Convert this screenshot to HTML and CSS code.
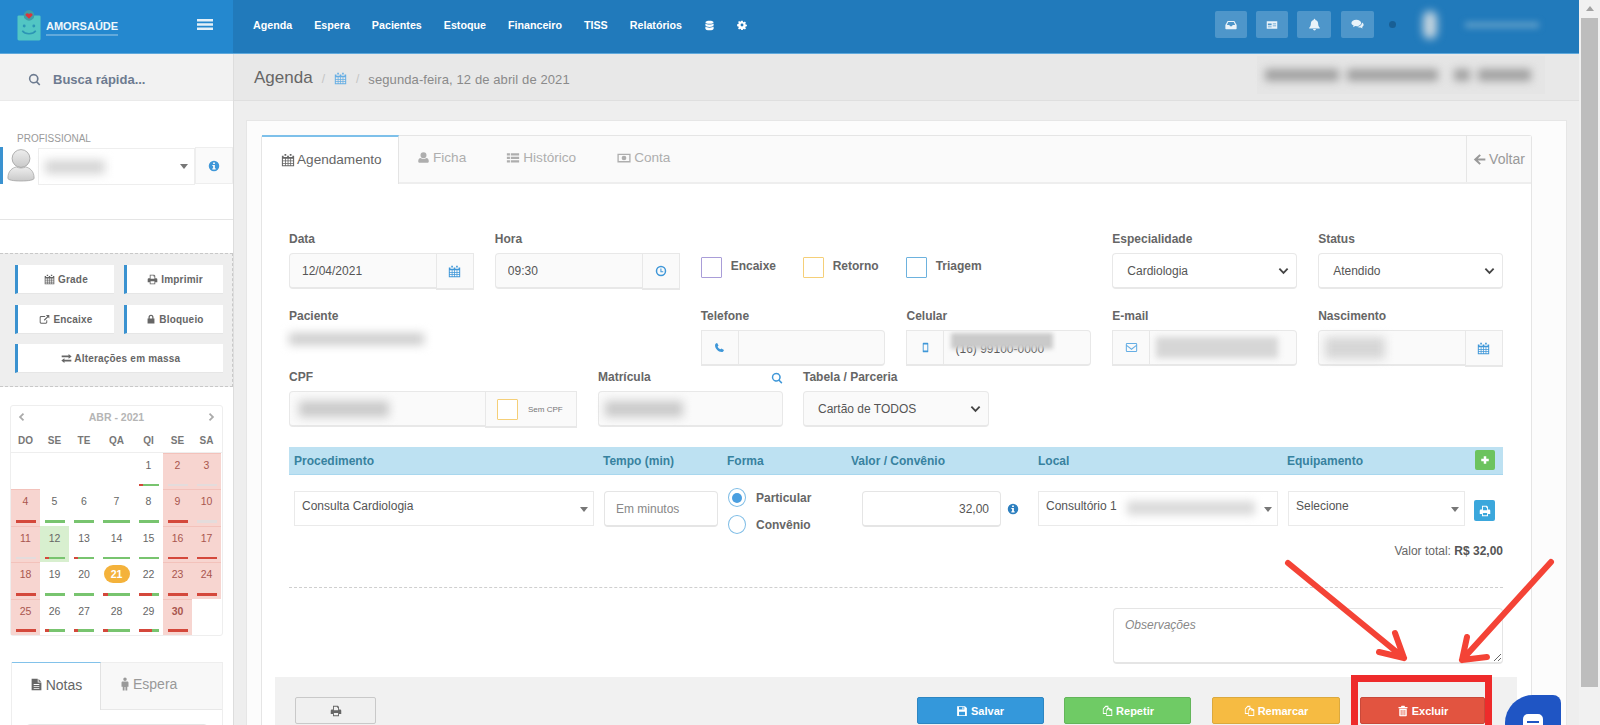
FILE: index.html
```html
<!DOCTYPE html>
<html lang="pt-BR">
<head>
<meta charset="utf-8">
<title>Agenda</title>
<link rel="stylesheet" href="styles.css">
</head>
<body>
<svg class="defs" aria-hidden="true">
  <symbol id="i-cal" viewBox="0 0 16 16"><path d="M4 1h2v2H4zM10 1h2v2h-2z"/><path fill-rule="evenodd" d="M1 3h2v1.5h4V3h2v1.5h4V3h2v12H1zM2.2 6.5v2h2.4v-2zM5.5 6.5v2h2.1v-2zM8.5 6.5v2h2.1v-2zM11.5 6.5v2h2.3v-2zM2.2 9.4v2h2.4v-2zM5.5 9.4v2h2.1v-2zM8.5 9.4v2h2.1v-2zM11.5 9.4v2h2.3v-2zM2.2 12.2v1.7h2.4v-1.7zM5.5 12.2v1.7h2.1v-1.7zM8.5 12.2v1.7h2.1v-1.7zM11.5 12.2v1.7h2.3v-1.7z"/></symbol>
  <symbol id="i-search" viewBox="0 0 16 16"><path fill-rule="evenodd" d="M7 1a6 6 0 0 1 4.8 9.6l3.4 3.4-1.4 1.5-3.5-3.4A6 6 0 1 1 7 1zm0 2a4 4 0 1 0 0 8 4 4 0 0 0 0-8z"/></symbol>
  <symbol id="i-clock" viewBox="0 0 16 16"><path fill-rule="evenodd" d="M8 1a7 7 0 1 1 0 14A7 7 0 0 1 8 1zm0 2a5 5 0 1 0 0 10A5 5 0 0 0 8 3zM7.200 4.500h1.400v3.700h2.400v1.300H7.200z"/></symbol>
  <symbol id="i-phone" viewBox="0 0 16 16"><path d="M4.500 1.500 6.600 5 5.300 6.500c.7 1.800 2 3.200 4 4.200l1.500-1.300 3.700 2.100c-.4 1.700-1.600 3-3.200 3C6 14.500 1.500 9.500 1.500 4.700c0-1.500 1.300-2.800 3-3.200z"/></symbol>
  <symbol id="i-mobile" viewBox="0 0 16 16"><path fill-rule="evenodd" d="M5 1h6a1 1 0 0 1 1 1v12a1 1 0 0 1-1 1H5a1 1 0 0 1-1-1V2a1 1 0 0 1 1-1zm.3 2.500v9h5.400v-9z"/></symbol>
  <symbol id="i-mail" viewBox="0 0 16 16"><path fill-rule="evenodd" d="M2.500 2.500h11A1.500 1.500 0 0 1 15 4v8a1.500 1.500 0 0 1-1.500 1.500h-11A1.500 1.500 0 0 1 1 12V4a1.500 1.500 0 0 1 1.500-1.500zm-.2 2.300L8 9.300l5.700-4.500V3.800H2.300zm0 1.600v5.800h11.400V6.400L8 11 2.300 6.400z"/></symbol>
  <symbol id="i-user" viewBox="0 0 16 16"><path d="M8 1.500a3.700 3.700 0 1 1 0 7.400 3.700 3.700 0 0 1 0-7.400zM4.500 8.500c1 .8 2.200 1.200 3.500 1.200s2.500-.4 3.500-1.200c2 .2 3 1.700 3 4 0 1.200-.8 2-2 2h-9c-1.200 0-2-.8-2-2 0-2.300 1-3.800 3-4z"/></symbol>
  <symbol id="i-list" viewBox="0 0 16 16"><path d="M1 2.500h3.500v2.500H1zM5.500 2.500H15v2.500H5.500zM1 6.500h3.500V9H1zM5.500 6.500H15V9H5.500zM1 10.500h3.500V13H1zM5.500 10.500H15V13H5.500z"/></symbol>
  <symbol id="i-money" viewBox="0 0 16 16"><path fill-rule="evenodd" d="M.5 3h15v10H.5zM2 4.500v7h12v-7zM8 5.300a2.700 2.700 0 1 1 0 5.400 2.700 2.700 0 0 1 0-5.400z"/></symbol>
  <symbol id="i-back" viewBox="0 0 16 16"><path d="M8 1.500 9.700 3.200 6 6.800h9.200v2.400H6l3.700 3.600L8 14.500 1 8z"/></symbol>
  <symbol id="i-print" viewBox="0 0 16 16"><path fill-rule="evenodd" d="M4 1h6.500L12 2.500V6h1.500A1.500 1.500 0 0 1 15 7.500V12h-3v3H4v-3H1V7.500A1.500 1.500 0 0 1 2.500 6H4zm1.200 1.200V7h5.600V3.500H9.500V2.200zM5.200 10.500v3.300h5.600v-3.300z"/></symbol>
  <symbol id="i-ext" viewBox="0 0 16 16"><path d="M3 3h6v1.400H3.400c-.6 0-1 .4-1 1v6.200c0 .6.400 1 1 1h6.200c.6 0 1-.4 1-1V9H12v3c0 1.200-.8 2-2 2H3c-1.200 0-2-.8-2-2V5c0-1.200.8-2 2-2z"/><path d="M10 1.500h5v5l-1.800-1.800-5 5-1.200-1.200 5-5z"/></symbol>
  <symbol id="i-lock" viewBox="0 0 16 16"><path fill-rule="evenodd" d="M8 1a4 4 0 0 1 4 4v2h1.500v8h-11V7H4V5a4 4 0 0 1 4-4zm0 2a2 2 0 0 0-2 2v2h4V5a2 2 0 0 0-2-2z"/></symbol>
  <symbol id="i-swap" viewBox="0 0 16 16"><path d="M11 1.500 15.500 5 11 8.500V6.200H1V3.800h10zM5 7.500v2.300h10v2.400H5v2.300L.5 11z"/></symbol>
  <symbol id="i-inbox" viewBox="0 0 16 16"><path fill-rule="evenodd" d="M3.500 2.500h9L15.500 8v4.500a1 1 0 0 1-1 1h-13a1 1 0 0 1-1-1V8zm.8 1.500L2.500 8h3.300l.9 1.500h2.600l.9-1.500h3.300l-1.800-4z"/></symbol>
  <symbol id="i-card" viewBox="0 0 16 16"><path fill-rule="evenodd" d="M1 3h14v10H1zM2.500 6v2.200h5V6zM9 6v1h4.500V6zM9 8.500v1h4.500v-1zM2.500 10v1h5v-1z"/></symbol>
  <symbol id="i-bell" viewBox="0 0 16 16"><path d="M8 .8c.6 0 1 .4 1 1v.6c2.300.5 3.500 2.400 3.500 4.800 0 2.300.8 3.700 2 4.800v.8h-13V12c1.200-1.100 2-2.500 2-4.800 0-2.400 1.200-4.300 3.500-4.800v-.6c0-.6.400-1 1-1zM6.200 13.500h3.600a1.800 1.800 0 0 1-3.600 0z"/></symbol>
  <symbol id="i-chat" viewBox="0 0 16 16"><path d="M6.500 2c3.300 0 6 1.800 6 4s-2.700 4-6 4l-1.200-.1L2.500 11.500l.7-2.300C1.500 8.500.5 7.300.5 6c0-2.200 2.700-4 6-4z"/><path d="M13.500 5.500c1.300.7 2 1.700 2 2.800 0 1.100-.7 2-1.800 2.700l.5 2-2.400-1.400-1.300.1c-1.300 0-2.400-.3-3.200-.9 3.500-.2 6.200-2.200 6.200-5.300z"/></symbol>
  <symbol id="i-db" viewBox="0 0 16 16"><path d="M8 1c3.300 0 6 1 6 2.300S11.300 5.600 8 5.600 2 4.600 2 3.300 4.700 1 8 1zM2 5.200c1 .9 3.400 1.500 6 1.500s5-.6 6-1.500v2.500C14 9 11.300 10 8 10S2 9 2 7.700zM2 9.600c1 .9 3.400 1.500 6 1.500s5-.6 6-1.500v3.100c0 1.300-2.700 2.300-6 2.300s-6-1-6-2.300z"/></symbol>
  <symbol id="i-gear" viewBox="0 0 16 16"><path fill-rule="evenodd" d="M6.800 1h2.400l.4 2 1.300.6 1.700-1.100 1.700 1.700-1.100 1.700.6 1.300 2 .4v2.400l-2 .4-.6 1.300 1.100 1.700-1.700 1.700-1.700-1.100-1.300.6-.4 2H6.800l-.4-2-1.300-.6-1.700 1.100-1.700-1.700 1.100-1.700-.6-1.300-2-.4V6.600l2-.4.6-1.300-1.100-1.700 1.700-1.700 1.700 1.100 1.300-.6zM8 5.700a2.300 2.300 0 1 0 0 4.600 2.300 2.300 0 0 0 0-4.600z"/></symbol>
  <symbol id="i-info" viewBox="0 0 16 16"><path fill-rule="evenodd" d="M8 1a7 7 0 1 1 0 14A7 7 0 0 1 8 1zM6.800 3.200v2.200h2.400V3.200zM5.800 6.500v1.400h1V11h-1v1.500h4.400V11h-1V6.500z"/></symbol>
  <symbol id="i-save" viewBox="0 0 16 16"><path fill-rule="evenodd" d="M1.500 1.500H12L14.500 4v10.500h-13zM4 2.500V6h7V2.500zM8.500 3h1.500v2.500H8.500zM4 9v4.500h8V9z"/></symbol>
  <symbol id="i-copy" viewBox="0 0 16 16"><path fill-rule="evenodd" d="M6 1h4l-.5 2L13 5l2 1v8.500H7V12H2.500V5zm1.800 6.500v5.800h6V7.500H11V5zM6 3 3.600 5.500v5.300H7V6.300L8.500 4.200 8.800 2.400z"/></symbol>
  <symbol id="i-trash" viewBox="0 0 16 16"><path fill-rule="evenodd" d="M6 1h4l.8 1.700H14V4.200H2V2.700h3.200zM3 5h10v9a1 1 0 0 1-1 1H4a1 1 0 0 1-1-1zm2 1.500v7h1v-7zm2.500 0v7h1v-7zm2.500 0v7h1v-7z"/></symbol>
  <symbol id="i-plus" viewBox="0 0 16 16"><path d="M6 2h4v4h4v4h-4v4H6v-4H2V6h4z"/></symbol>
  <symbol id="i-file" viewBox="0 0 16 16"><path fill-rule="evenodd" d="M2 1h7.500v4.500H14V15H2zM4.500 7.500v1h7v-1zM4.500 10v1h7v-1zM4.500 12.500v1h7v-1z"/><path d="M10.500 1.200 13.800 4.500h-3.300z"/></symbol>
  <symbol id="i-male" viewBox="0 0 16 16"><path d="M8 .5a2 2 0 1 1 0 4 2 2 0 0 1 0-4zM5.500 5h5c.9 0 1.500.6 1.500 1.500v4.500h-1.400V15.500H8.500v-4h-1v4H5.400V11H4V6.500C4 5.600 4.600 5 5.500 5z"/></symbol>
  <symbol id="i-bars" viewBox="0 0 16 12" preserveAspectRatio="none"><path d="M0 0h16v2.600H0zM0 4.700h16v2.600H0zM0 9.400h16V12H0z"/></symbol>
  <symbol id="i-left" viewBox="0 0 16 16"><path d="M11 1.500 13 3.500 8.500 8 13 12.500 11 14.500 4.500 8z"/></symbol>
  <symbol id="i-right" viewBox="0 0 16 16"><path d="M5 1.500 3 3.500 7.500 8 3 12.500 5 14.500 11.500 8z"/></symbol>
</svg>

<div class="page">
  <div class="app">
    <header class="topbar">
      <div class="brand">
        <svg class="logo" viewBox="0 0 26 32" aria-hidden="true">
          <rect x="0.500" y="6" width="24" height="26" rx="1.500" fill="#52c6c4"/>
          <circle cx="12.500" cy="6" r="5.500" fill="#3f9ea8"/>
          <path d="M12.500 9.500 9 6c-1-1.700 1.900-3.300 3.500-1.500C14.100 2.700 17 4.300 16 6z" fill="#d9363e"/>
          <circle cx="7.500" cy="17" r="1.500" fill="#2c95b5"/>
          <circle cx="17.500" cy="17" r="1.500" fill="#2c95b5"/>
          <path d="M5.500 22c3 4 11 4 14 0" fill="none" stroke="#2c95b5" stroke-width="1.600"/>
        </svg>
        <div class="brand-text">
          <span class="brand-name">AMORSAÚDE</span>
          <span class="brand-tag"></span>
        </div>
        <svg class="ico menu-ico"><use href="#i-bars"/></svg>
      </div>
      <nav class="nav">
        <ul class="nav-links">
          <li>Agenda</li>
          <li>Espera</li>
          <li>Pacientes</li>
          <li>Estoque</li>
          <li>Financeiro</li>
          <li>TISS</li>
          <li>Relatórios</li>
          <li><svg class="ico ico-11"><use href="#i-db"/></svg></li>
          <li><svg class="ico ico-10"><use href="#i-gear"/></svg></li>
        </ul>
        <div class="nav-tools">
          <span class="tool tool-32"><svg class="ico ico-12"><use href="#i-inbox"/></svg></span>
          <span class="tool tool-32"><svg class="ico ico-12"><use href="#i-card"/></svg></span>
          <span class="tool tool-34"><svg class="ico ico-13"><use href="#i-bell"/></svg></span>
          <span class="tool tool-33"><svg class="ico ico-13"><use href="#i-chat"/></svg></span>
          <span class="status-dot"></span>
          <span class="blur-avatar"></span>
          <span class="blur-user"></span>
        </div>
      </nav>
    </header>

    <div class="content">
      <aside class="sidebar">
        <div class="quick">
          <svg class="ico ico-13"><use href="#i-search"/></svg>
          <span>Busca rápida...</span>
        </div>
        <div class="prof-label">PROFISSIONAL</div>
        <div class="prof-row">
          <span class="prof-avatar">
            <svg viewBox="0 0 32 38" aria-hidden="true">
              <defs><linearGradient id="av" x1="0" y1="0" x2="0" y2="1"><stop offset="0" stop-color="#eeeeee"/><stop offset="1" stop-color="#c9c9c9"/></linearGradient></defs>
              <circle cx="16" cy="11" r="9.500" fill="url(#av)" stroke="#9a9a9a" stroke-width=".8"/>
              <path d="M2 32c0-8 5-11 9-12 3 1.500 7 1.500 10 0 4 1 9 4 9 12 0 2-6 3-14 3S2 34 2 32z" fill="url(#av)" stroke="#a3a3a3" stroke-width=".8"/>
            </svg>
          </span>
          <span class="prof-select"><span class="blur blur-prof"></span><span class="caret"></span></span>
          <span class="prof-info"><svg class="ico ico-12 blue"><use href="#i-info"/></svg></span>
        </div>
        <div class="side-rule"></div>
        <div class="shortcuts">
          <button class="short"><svg class="ico ico-11"><use href="#i-cal"/></svg> Grade</button>
          <button class="short"><svg class="ico ico-11"><use href="#i-print"/></svg> Imprimir</button>
          <button class="short"><svg class="ico ico-11"><use href="#i-ext"/></svg> Encaixe</button>
          <button class="short"><svg class="ico ico-10"><use href="#i-lock"/></svg> Bloqueio</button>
          <button class="short short-wide"><svg class="ico ico-11"><use href="#i-swap"/></svg> Alterações em massa</button>
        </div>
        <div class="calendar">
          <div class="cal-head">
            <svg class="ico ico-10"><use href="#i-left"/></svg>
            <span>ABR - 2021</span>
            <svg class="ico ico-10"><use href="#i-right"/></svg>
          </div>
          <div class="cal-grid cal-week">
            <span>DO</span><span>SE</span><span>TE</span><span>QA</span><span>QI</span><span>SE</span><span>SA</span>
          </div>
          <div class="cal-grid cal-days">
            <div class="day"></div><div class="day"></div><div class="day"></div><div class="day"></div>
            <div class="day"><span class="num">1</span><i class="bar bar-m"></i></div>
            <div class="day off"><span class="num">2</span><i class="bar bar-n"></i></div>
            <div class="day off"><span class="num">3</span><i class="bar bar-n"></i></div>

            <div class="day off"><span class="num">4</span><i class="bar bar-r"></i></div>
            <div class="day"><span class="num">5</span><i class="bar bar-g"></i></div>
            <div class="day"><span class="num">6</span><i class="bar bar-g"></i></div>
            <div class="day"><span class="num">7</span><i class="bar bar-g"></i></div>
            <div class="day"><span class="num">8</span><i class="bar bar-g"></i></div>
            <div class="day off"><span class="num">9</span><i class="bar bar-r"></i></div>
            <div class="day off"><span class="num">10</span><i class="bar bar-n"></i></div>

            <div class="day off"><span class="num">11</span><i class="bar bar-n"></i></div>
            <div class="day sel"><span class="num">12</span><i class="bar bar-m"></i></div>
            <div class="day"><span class="num">13</span><i class="bar bar-m"></i></div>
            <div class="day"><span class="num">14</span><i class="bar bar-g"></i></div>
            <div class="day"><span class="num">15</span><i class="bar bar-g"></i></div>
            <div class="day off"><span class="num">16</span><i class="bar bar-r"></i></div>
            <div class="day off"><span class="num">17</span><i class="bar bar-r"></i></div>

            <div class="day off"><span class="num">18</span><i class="bar bar-r"></i></div>
            <div class="day"><span class="num">19</span><i class="bar bar-g"></i></div>
            <div class="day"><span class="num">20</span><i class="bar bar-g"></i></div>
            <div class="day"><span class="num today">21</span><i class="bar bar-m"></i></div>
            <div class="day"><span class="num">22</span><i class="bar bar-h"></i></div>
            <div class="day off"><span class="num">23</span><i class="bar bar-r"></i></div>
            <div class="day off"><span class="num">24</span><i class="bar bar-r"></i></div>

            <div class="day off"><span class="num">25</span><i class="bar bar-r"></i></div>
            <div class="day"><span class="num">26</span><i class="bar bar-m"></i></div>
            <div class="day"><span class="num">27</span><i class="bar bar-m"></i></div>
            <div class="day"><span class="num">28</span><i class="bar bar-m"></i></div>
            <div class="day"><span class="num">29</span><i class="bar bar-h"></i></div>
            <div class="day off"><span class="num strong">30</span><i class="bar bar-r"></i></div>
            <div class="day"></div>
          </div>
        </div>
        <div class="notes">
          <div class="notes-tabs">
            <span class="notes-tab active"><svg class="ico ico-13"><use href="#i-file"/></svg> Notas</span>
            <span class="notes-tab"><svg class="ico ico-14"><use href="#i-male"/></svg> Espera</span>
          </div>
          <div class="notes-body"><div class="notes-input"></div></div>
        </div>
      </aside>

      <main class="main">
        <div class="crumbs">
          <h1>Agenda</h1>
          <span class="sep">/</span>
          <svg class="ico ico-13 blue-soft"><use href="#i-cal"/></svg>
          <span class="sep">/</span>
          <span class="crumb-text">segunda-feira, 12 de abril de 2021</span>
          <span class="crumb-clinic"><span class="blur blur-clinic"></span></span>
        </div>
        <section class="card">
          <div class="panel">
            <div class="tabs">
              <span class="tab tab-active"><svg class="ico ico-14"><use href="#i-cal"/></svg> Agendamento</span>
              <span class="tab tab-ficha"><svg class="ico ico-13"><use href="#i-user"/></svg> Ficha</span>
              <span class="tab tab-hist"><svg class="ico ico-14"><use href="#i-list"/></svg> Histórico</span>
              <span class="tab tab-conta"><svg class="ico ico-14"><use href="#i-money"/></svg> Conta</span>
              <span class="tab-back"><svg class="ico ico-13"><use href="#i-back"/></svg> Voltar</span>
            </div>
            <div class="panel-body">
              <div class="form-grid">
                <div class="field">
                  <label>Data</label>
                  <div class="group"><input class="ctl" value="12/04/2021"><span class="addon addon-r"><svg class="ico ico-13 blue"><use href="#i-cal"/></svg></span></div>
                </div>
                <div class="field">
                  <label>Hora</label>
                  <div class="group"><input class="ctl" value="09:30"><span class="addon addon-r"><svg class="ico ico-12 blue"><use href="#i-clock"/></svg></span></div>
                </div>
                <div class="checks">
                  <span class="check"><i class="box box-purple"></i>Encaixe</span>
                  <span class="check"><i class="box box-yellow"></i>Retorno</span>
                  <span class="check"><i class="box box-blue"></i>Triagem</span>
                </div>
                <div class="field">
                  <label>Especialidade</label>
                  <select class="sel-native"><option>Cardiologia</option></select>
                </div>
                <div class="field">
                  <label>Status</label>
                  <select class="sel-native"><option>Atendido</option></select>
                </div>
              </div>

              <div class="form-grid row-2">
                <div class="field span-2">
                  <label>Paciente</label>
                  <span class="blur blur-patient"></span>
                </div>
                <div class="field">
                  <label>Telefone</label>
                  <div class="group"><span class="addon addon-l"><svg class="ico ico-11 blue"><use href="#i-phone"/></svg></span><input class="ctl"></div>
                </div>
                <div class="field">
                  <label>Celular</label>
                  <div class="group"><span class="addon addon-l"><svg class="ico ico-11 blue"><use href="#i-mobile"/></svg></span><span class="ctl ctl-blur ctl-cel">(16) 99100-0000<span class="blur blur-cel"></span></span></div>
                </div>
                <div class="field">
                  <label>E-mail</label>
                  <div class="group"><span class="addon addon-l"><svg class="ico ico-13 blue-soft"><use href="#i-mail"/></svg></span><span class="ctl ctl-blur"><span class="blur blur-mail"></span></span></div>
                </div>
                <div class="field">
                  <label>Nascimento</label>
                  <div class="group"><span class="ctl ctl-blur"><span class="blur blur-birth"></span></span><span class="addon addon-r"><svg class="ico ico-13 blue"><use href="#i-cal"/></svg></span></div>
                </div>
              </div>

              <div class="row-3">
                <div class="field f-cpf">
                  <label>CPF</label>
                  <div class="group"><span class="ctl ctl-blur"><span class="blur blur-cpf"></span></span><span class="addon addon-cpf"><i class="box box-yellow"></i><span>Sem CPF</span></span></div>
                </div>
                <div class="field f-mat">
                  <label>Matrícula <svg class="ico ico-12 blue mat-search"><use href="#i-search"/></svg></label>
                  <div class="group"><span class="ctl ctl-blur"><span class="blur blur-mat"></span></span></div>
                </div>
                <div class="field f-tab">
                  <label>Tabela / Parceria</label>
                  <select class="sel-native sel-gray"><option>Cartão de TODOS</option></select>
                </div>
              </div>

              <div class="proc-grid proc-head">
                <span>Procedimento</span>
                <span>Tempo (min)</span>
                <span>Forma</span>
                <span>Valor / Convênio</span>
                <span>Local</span>
                <span>Equipamento</span>
                <span class="plus"><svg class="ico ico-10"><use href="#i-plus"/></svg></span>
              </div>
              <div class="proc-grid proc-row">
                <div class="sel2 sel-proc"><span>Consulta Cardiologia</span><span class="caret"></span></div>
                <input class="ctl2 tempo" placeholder="Em minutos">
                <div class="radios">
                  <span class="radio"><i class="dot dot-on"></i>Particular</span>
                  <span class="radio"><i class="dot"></i>Convênio</span>
                </div>
                <div class="valor">
                  <input class="ctl2 valor-input" value="32,00">
                  <svg class="ico ico-12 blue-dark"><use href="#i-info"/></svg>
                </div>
                <div class="sel2 sel-local"><span>Consultório 1</span><span class="blur blur-local"></span><span class="caret"></span></div>
                <div class="sel2 sel-equip"><span>Selecione</span><span class="caret"></span></div>
                <span class="print-mini"><svg class="ico ico-12"><use href="#i-print"/></svg></span>
              </div>
              <div class="total">Valor total: <b>R$ 32,00</b></div>
              <div class="dotted"></div>
              <div class="obs-row"><textarea class="obs" placeholder="Observações"></textarea></div>
              <div class="footer">
                <button class="btn btn-print"><svg class="ico ico-12"><use href="#i-print"/></svg></button>
                <div class="actions">
                  <button class="btn btn-blue"><svg class="ico ico-12"><use href="#i-save"/></svg> Salvar</button>
                  <button class="btn btn-green"><svg class="ico ico-12"><use href="#i-copy"/></svg> Repetir</button>
                  <button class="btn btn-yellow"><svg class="ico ico-12"><use href="#i-copy"/></svg> Remarcar</button>
                  <button class="btn btn-red"><svg class="ico ico-12"><use href="#i-trash"/></svg> Excluir</button>
                </div>
              </div>
            </div>
          </div>
        </section>
      </main>
    </div>
  </div>

  <div class="scrollbar">
    <span class="scroll-up"></span>
    <span class="scroll-thumb"></span>
  </div>

  <svg class="arrows" viewBox="0 0 1600 725" aria-hidden="true">
    <g fill="none" stroke="#f44336" stroke-width="6" stroke-linecap="round" stroke-linejoin="round">
      <path d="M1288 563 1404 658M1395 633 1404 658 1379 652"/>
      <path d="M1551 562 1462 660M1467 637 1462 660 1487 657"/>
    </g>
  </svg>
  <div class="red-box"></div>
  <div class="chat-bubble"><span class="chat-glyph"></span></div>
</div>
</body>
</html>
```

FILE: styles.css
```css
* { box-sizing: border-box; }
html, body { margin: 0; padding: 0; height: 100%; overflow: hidden; }
body { font-family: "Liberation Sans", Arial, sans-serif; font-size: 12px; color: #666; background: #eee; }
.defs { position: absolute; width: 0; height: 0; }
ul { list-style: none; margin: 0; padding: 0; }
button, input, select, textarea { font-family: inherit; }

.ico { display: inline-block; width: 12px; height: 12px; fill: currentColor; vertical-align: -2px; flex: none; }
.ico-10 { width: 10px; height: 10px; vertical-align: -1px; }
.ico-11 { width: 11px; height: 11px; }
.ico-12 { width: 12px; height: 12px; }
.ico-13 { width: 13px; height: 13px; }
.ico-14 { width: 14px; height: 14px; }
.blue { color: #3f97d8; }
.blue-soft { color: #66aee4; }
.blue-dark { color: #2d7fbf; }

.blur { display: block; background: #bdbdbd; filter: blur(5px); }

.page { display: flex; width: 1600px; height: 725px; overflow: hidden; position: relative; }
.app { width: 1579px; height: 725px; display: flex; flex-direction: column; }

/* top bar */
.topbar { display: flex; height: 54px; flex: none; border-bottom: 1px solid #5fa9dc; }
.brand { width: 233px; background: #2488cf; display: flex; align-items: center; padding-left: 17px; color: #fff; }
.logo { width: 25px; height: 32px; margin-top: -3px; flex: none; }
.brand-text { display: flex; flex-direction: column; margin-left: 4px; width: 151px; }
.brand-name { font-size: 11px; font-weight: bold; line-height: 12px; color: #eef7fb; margin-top: 3px; }
.brand-tag { display: block; width: 72px; height: 2px; margin-top: 2px; background: #62a9db; }
.menu-ico { width: 16px; height: 11px; color: #e4f0f8; margin-left: 0; margin-top: -5px; }
.nav { flex: 1; background: #217abb; display: flex; align-items: center; justify-content: space-between; color: #fff; }
.nav-links { display: flex; align-items: center; gap: 22px; padding-left: 20px; font-size: 10.700px; font-weight: bold; margin-top: -4px; }
.nav-tools { display: flex; align-items: center; gap: 9px; padding-right: 40px; height: 53px; margin-top: -4px; }
.tool { height: 27px; background: #4e96ca; border-radius: 2px; display: flex; align-items: center; justify-content: center; color: #eaf3f9; }
.tool-32 { width: 32px; }
.tool-33 { width: 33px; margin-left: 1px; }
.tool-34 { width: 34px; }
.status-dot { width: 7px; height: 7px; border-radius: 50%; background: #185f95; margin-left: 5.500px; }
.blur-avatar { width: 14px; height: 28px; margin-left: 18.500px; border-radius: 7px; background: #c3d4df; filter: blur(4px); }
.blur-user { width: 74px; height: 6px; margin-left: 19px; background: #5c9dc9; filter: blur(3px); }

/* layout */
.content { display: flex; flex: 1; min-height: 0; }
.sidebar { width: 234px; flex: none; background: #fff; border-right: 1px solid #ddd; height: 671px; overflow: hidden; }
.main { flex: 1; min-width: 0; }

/* sidebar */
.quick { height: 47px; background: #f2f2f2; border-bottom: 1px solid #eaeaea; display: flex; align-items: center; padding: 5px 0 0 28px; gap: 12px; color: #6d7b90; font-size: 13px; font-weight: bold; }
.prof-label { font-size: 10px; color: #9a9a9a; padding-left: 17px; margin-top: 32px; line-height: 12px; }
.prof-row { display: flex; height: 38px; margin-top: 2px; }
.prof-avatar { width: 38px; height: 37px; border-left: 3px solid #3a92d0; padding-left: 3px; overflow: hidden; flex: none; }
.prof-avatar svg { display: block; width: 30px; height: 38px; }
.prof-select { width: 157px; height: 37px; margin-top: 1px; border: 1px solid #eee; display: flex; align-items: center; justify-content: space-between; padding: 0 6px 0 6px; }
.blur-prof { width: 60px; height: 14px; background: #d6d6d6; }
.caret { display: block; width: 0; height: 0; border-left: 4px solid transparent; border-right: 4px solid transparent; border-top: 5px solid #777; flex: none; }
.prof-info { width: 38px; height: 37px; background: #fafafa; border: 1px solid #eee; display: flex; align-items: center; justify-content: center; }
.side-rule { height: 1px; background: #e5e5e5; margin-top: 34px; }
.shortcuts { margin-top: 33px; height: 134px; background: #eeeeee; border: 1px dashed #c8c8c8; border-left: 0; padding: 11px 9px 0 15px; display: grid; grid-template-columns: 99px 99px; grid-auto-rows: 29px; column-gap: 10px; row-gap: 10.500px; }
.short { border: 0; border-left: 3px solid #3a92d0; background: #fff; color: #666; font-size: 10px; font-weight: bold; letter-spacing: .2px; padding: 1px 0 0; border-bottom: 1px solid #e6e6e6; }
.short-wide { grid-column: span 2; }

.calendar { margin: 18px 0 0 10px; width: 213px; height: 231px; border: 1px solid #eee; border-radius: 3px; background: #fff; }
.cal-head { display: flex; justify-content: space-between; align-items: center; height: 22px; padding: 0 5px; font-size: 10.500px; font-weight: bold; color: #b5b5b5; }
.cal-head .ico { color: #aaa; }
.cal-grid { display: grid; grid-template-columns: 29px 29px 30px 35px 29px 29px 29px; }
.cal-week { height: 25px; font-size: 10px; font-weight: bold; color: #777; text-align: center; align-items: center; border-bottom: 1px solid #eee; }
.cal-days { grid-auto-rows: 36.400px; }
.day { position: relative; display: flex; justify-content: center; padding-top: 4px; font-size: 10.500px; color: #666; }
.off { background: #f7d5d0; color: #a9554e; border-top: 1px solid #f3c2bb; padding-top: 3px; }
.sel { background: #d8efcf; }
.num { height: 16px; line-height: 16px; }
.today { width: 26px; height: 18px; line-height: 18px; margin-top: -1px; border-radius: 9px; background: #f4b23b; color: #fff; font-weight: bold; text-align: center; }
.strong { font-weight: bold; }
.bar { position: absolute; bottom: 3px; left: 50%; width: 20px; margin-left: -10px; height: 2.500px; }
.cal-days .day:nth-child(7n+4) .bar { width: 27px; margin-left: -13.500px; }
.bar-g { background: #78c46f; }
.bar-r { background: #d4483b; }
.bar-n { background: #e4dcdc; }
.bar-m { background: linear-gradient(90deg, #d4483b 20%, #78c46f 20%); }
.bar-h { background: linear-gradient(90deg, #d4483b 65%, #78c46f 65%); }

.notes { margin: 26px 0 0 11px; width: 212px; border: 1px solid #eee; border-top: 0; }
.notes-tabs { display: flex; height: 48px; }
.notes-tab { display: flex; align-items: center; gap: 3px; font-size: 14px; color: #999; padding-bottom: 4px; }
.notes-tab:first-child { width: 89px; justify-content: center; background: #fff; color: #666; border-top: 1px solid #82c2ea; border-right: 1px solid #e2e2e2; }
.notes-tab:last-child { flex: 1; gap: 1px; padding-left: 17px; background: #f8f8f8; border-bottom: 1px solid #e8e8e8; border-top: 1px solid #eee; }
.notes-body { padding: 14px; }
.notes-input { height: 60px; border: 1px solid #e5e5e5; border-radius: 4px; }

/* breadcrumb */
.crumbs { height: 47px; background: #e8e8e8; border-bottom: 1px solid #dfdfdf; display: flex; align-items: center; padding: 4px 0 0 21px; color: #999; }
.crumbs h1 { margin: 0 0 3px -1px; font-size: 17px; font-weight: normal; color: #666; }
.crumbs .sep { color: #c4c4c4; margin: 0 9px; font-size: 12px; }
.crumbs .ico { margin-top: -1px; }
.crumb-text { font-size: 13px; letter-spacing: .1px; color: #8a8a8a; }
.crumb-clinic { margin-left: auto; margin-right: 34px; width: 288px; height: 38px; background: #e5e5e5; display: flex; align-items: center; padding-left: 8px; margin-top: -8px; }
.blur-clinic { width: 266px; height: 12px; background: linear-gradient(90deg, #a0a0a0 0 28%, transparent 28% 31%, #a0a0a0 31% 65%, transparent 65% 71%, #a0a0a0 71% 77%, transparent 77% 80%, #a0a0a0 80%); filter: blur(4px); }

/* card */
.card { margin: 19px 12px 0 12px; background: #fcfcfc; border: 1px solid #e6e6e6; border-bottom: 0; padding: 14px 34px 0 14px; height: 700px; }
.panel { background: #fff; border: 1px solid #e5e5e5; border-bottom: 0; border-radius: 3px 3px 0 0; }
.tabs { display: flex; height: 48px; background: #fafafa; border-bottom: 2px solid #eee; font-size: 13.600px; color: #aaa; }
.tab { display: flex; align-items: center; gap: 3px; height: 46px; padding-bottom: 3px; color: #aeaeae; }
.tab-active { width: 137px; height: 49px; margin-top: -1px; gap: 2px; background: #fff; color: #666; border-top: 2px solid #7dc0ea; border-right: 1px solid #e4e4e4; padding-left: 19px; padding-bottom: 2px; z-index: 1; }
.tab-ficha { margin-left: 18px; }
.tab-hist { margin-left: 40px; }
.tab-conta { margin-left: 41px; }
.tab-back { margin-left: auto; width: 65px; height: 46px; border-left: 1px solid #e6e6e6; display: flex; align-items: center; justify-content: center; gap: 3px; font-size: 14px; color: #999; }
.panel-body { padding: 49px 28px 0 27px; }

/* form */
.form-grid { display: grid; grid-template-columns: repeat(6, 1fr); column-gap: 21px; }
.row-2 { margin-top: 21px; }
.row-3 { display: flex; margin-top: 5px; }
.span-2 { grid-column: span 2; }
.field { min-width: 0; position: relative; }
.field label { display: block; height: 13px; line-height: 13px; margin-bottom: 7px; font-weight: bold; font-size: 12px; color: #666; }
.group { display: flex; height: 36px; }
.ctl { flex: 1; min-width: 0; height: 36px; background: #fafafa; border: 1px solid #e8e8e8; border-bottom-width: 2px; border-radius: 4px 0 0 4px; padding: 0 12px; font-size: 12px; color: #555; }
.ctl:last-child { border-radius: 0 4px 4px 0; }
.ctl:only-child { border-radius: 4px; }
.ctl-blur { display: flex; align-items: center; padding: 0 6px; }
.ctl-cel { position: relative; padding: 3px 0 0 11px; overflow: hidden; }
.addon { flex: none; width: 38px; background: #fafafa; border: 1px solid #e8e8e8; border-bottom-width: 2px; display: flex; align-items: center; justify-content: center; }
.addon-r { margin-left: -1px; height: 37px; }
.addon-l { margin-right: -1px; }
.checks { grid-column: span 2; display: flex; padding-top: 24px; font-weight: bold; color: #666; }
.check { display: flex; align-items: flex-start; gap: 9px; line-height: 18px; }
.check:nth-child(1) { width: 102px; }
.check:nth-child(2) { width: 103px; }
.box { display: block; flex: none; width: 21px; height: 21px; background: #fff; border: 1px solid #ccc; border-radius: 1px; }
.box-purple { border-color: #a99dd8; }
.box-yellow { border-color: #f5cf78; }
.box-blue { border-color: #6db2de; }
.sel-native { appearance: none; width: 100%; height: 36px; background: #fff url("data:image/svg+xml,%3Csvg xmlns='http://www.w3.org/2000/svg' viewBox='0 0 12 8'%3E%3Cpath d='M1.500 1.500 6 6l4.500-4.500' fill='none' stroke='%23444' stroke-width='2'/%3E%3C/svg%3E") no-repeat right 7px center / 11px 8px; border: 1px solid #e8e8e8; border-bottom-width: 2px; border-radius: 4px; padding-left: 14px; font-size: 12px; color: #555; }
.sel-gray { background-color: #fafafa; }
.blur-patient { width: 135px; height: 12px; margin-top: 10px; background: #cdcdcd; }
.blur-cel { position: absolute; left: 7px; top: 2px; width: 102px; height: 16px; background: #cacaca; filter: blur(2px); }
.blur-mail { width: 122px; height: 21px; background: #d6d6d6; filter: blur(3px); }
.blur-birth { width: 60px; height: 22px; background: #d6d6d6; filter: blur(5px); }
.blur-cpf { width: 90px; height: 16px; margin-left: 3px; background: #cacaca; }
.blur-mat { width: 78px; height: 16px; background: #cacaca; }
.f-cpf { width: 288px; }
.f-mat { width: 185px; margin-left: 21px; }
.f-tab { width: 186px; margin-left: 20px; }
.addon-cpf { width: 92px; margin-left: -1px; height: 37px; gap: 10px; font-size: 8px; color: #777; justify-content: flex-start; padding-left: 11px; }
.mat-search { position: absolute; right: 0; top: 1px; }

/* procedures */
.proc-grid { display: grid; grid-template-columns: 309px 124px 124px 187px 249px 188px 28px; padding-left: 5px; }
.proc-head { margin-top: 20px; height: 28px; background: #bde1f2; border-bottom: 1px solid #a8d7ee; align-items: center; font-weight: bold; font-size: 12px; color: #37829f; }
.plus { width: 20px; height: 20px; background: #6cc35d; color: #fff; border-radius: 2px; display: flex; align-items: center; justify-content: center; margin-top: -2px; }
.proc-row { margin-top: 16px; height: 56px; align-items: flex-start; }
.sel2 { height: 35px; background: #fff; border: 1px solid #eaeaea; display: flex; align-items: center; padding: 0 6px 6px 7px; font-size: 12px; color: #555; position: relative; }
.sel2 .caret { position: absolute; right: 5px; top: 15px; }
.sel-proc { width: 300px; }
.sel-local { width: 240px; }
.sel-equip { width: 177px; margin-left: 1px; }
.blur-local { width: 128px; height: 14px; margin-left: 10px; background: #dadada; filter: blur(4px); margin-top: 4px; }
.ctl2 { height: 36px; background: #fff; border: 1px solid #e5e5e5; border-bottom-width: 2px; border-radius: 4px; padding: 0 11px; font-size: 12px; color: #555; }
.ctl2::placeholder { color: #888; opacity: 1; }
.tempo { width: 114px; margin-left: 1px; }
.radios { display: flex; flex-direction: column; margin: -3px 0 0 1px; gap: 8px; font-weight: bold; }
.radio { display: flex; align-items: center; gap: 10px; height: 19px; }
.dot { display: block; width: 18px; height: 19px; border-radius: 50%; border: 1px solid #7fbde6; background: #fff; position: relative; flex: none; }
.dot-on::after { content: ""; position: absolute; left: 3px; top: 3.500px; width: 10px; height: 10px; border-radius: 50%; background: #4a9fe0; }
.valor { display: flex; align-items: center; gap: 6px; margin-left: 11px; height: 36px; }
.valor-input { width: 139px; text-align: right; }
.print-mini { width: 21px; height: 21px; margin-top: 9px; margin-left: -1px; background: #3ba7dc; color: #fff; border-radius: 2px; display: flex; align-items: center; justify-content: center; }
.total { text-align: right; font-size: 12px; color: #666; margin-top: -4px; height: 16px; line-height: 16px; }
.total b { color: #555; }
.dotted { margin-top: 28px; border-top: 1px dashed #cfcfcf; }
.obs-row { display: flex; justify-content: flex-end; margin-top: 20px; }
.obs { width: 390px; height: 56px; border: 1px solid #e5e5e5; border-bottom-width: 2px; border-radius: 4px; padding: 9px 11px; font-size: 12px; color: #777; display: block; resize: both; }
.obs::placeholder { font-style: italic; color: #888; opacity: 1; }
.footer { margin: 13px -14px 0; height: 80px; background: #f1f1f1; display: flex; justify-content: space-between; padding: 20px 32px 0 20px; }
.btn { height: 27px; border: 1px solid transparent; border-radius: 2px; font-size: 11px; font-weight: bold; color: #fff; padding: 0; }
.btn-print { width: 81px; background: #f0f0f0; border-color: #c9c9c9; color: #666; }
.actions { display: grid; grid-template-columns: 127px 127px 128px 125px; column-gap: 20.500px; }
.btn-blue { background: #3498db; border-color: #2d86c2; }
.btn-green { background: #6fcb65; border-color: #63b55a; }
.btn-yellow { background: #f6bb42; border-color: #dba93e; }
.btn-red { background: #e25440; border-color: #c9493a; }

/* scrollbar */
.scrollbar { width: 21px; height: 725px; flex: none; background: #f1f1f1; padding: 0 2px; display: flex; flex-direction: column; align-items: center; }
.scroll-up { display: block; width: 0; height: 0; margin-top: 6px; border-left: 4px solid transparent; border-right: 4px solid transparent; border-bottom: 5px solid #a3a3a3; }
.scroll-thumb { display: block; width: 17px; height: 669px; margin-top: 7px; background: #bdbdbd; }

/* overlays */
.arrows { position: absolute; inset: 0; width: 1600px; height: 725px; pointer-events: none; }
.red-box { position: absolute; left: 1351px; top: 675px; width: 141px; height: 70px; border: 7px solid #ee2b2b; pointer-events: none; }
.chat-bubble { position: absolute; left: 1505px; top: 695px; width: 56px; height: 56px; background: #1f55c4; border-radius: 28px 8px 0 28px; }
.chat-glyph { position: absolute; left: 18px; top: 19px; width: 20px; height: 20px; background: #fff; border-radius: 5px; }
.chat-glyph::after { content: ""; position: absolute; left: 4px; right: 4px; top: 7px; height: 2px; background: #1f55c4; }
```
